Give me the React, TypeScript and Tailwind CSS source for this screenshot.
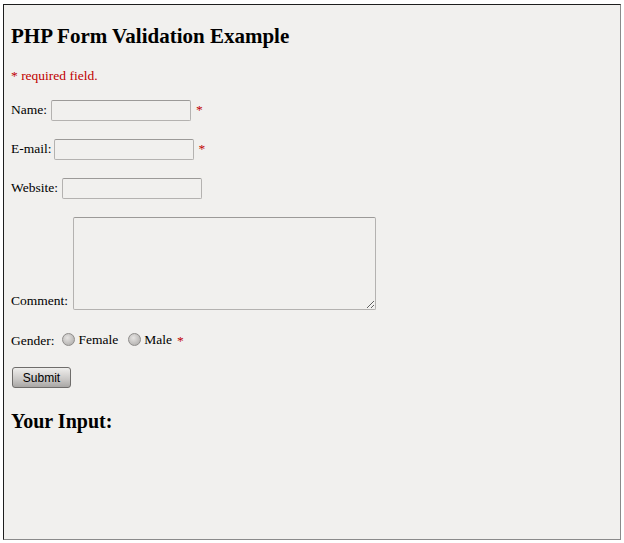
import React from "react";

const serif = "font-['Liberation_Serif','Times_New_Roman',serif]";

function Star() {
  return <span className="ml-[5px] text-[#c00000]">*</span>;
}

function Field({ label, gap, star }: { label: string; gap: string; star?: boolean }) {
  return (
    <div className="flex items-center h-[21px]">
      <span>{label}</span>
      <input
        type="text"
        className={`${gap} h-[21px] w-[140px] border border-[#b4b2b0] border-t-[#9c9a98] bg-[#f1f0ee] rounded-[2px] outline-none`}
      />
      {star && <Star />}
    </div>
  );
}

function Radio({ label }: { label: string }) {
  return (
    <span className="inline-flex items-center">
      <span className="w-[13px] h-[13px] rounded-full border border-[#8e8c8a] bg-[radial-gradient(circle_at_40%_35%,#e6e4e2,#a8a6a4)]" />
      <span className="ml-[3px]">{label}</span>
    </span>
  );
}

export default function App() {
  return (
    <div className="w-[624px] h-[543px] bg-white pl-[3px] pt-[4px]">
      <div
        className={`w-[618px] h-[536px] bg-[#f1f0ee] border-l border-t border-l-[#1e1e1e] border-t-[#1e1e1e] border-r border-b border-r-[#8a8a8a] border-b-[#8a8a8a] pl-[7px] text-[13.5px] leading-none text-black ${serif}`}
      >
        <h2 className="pt-[21px] text-[21px] font-bold">PHP Form Validation Example</h2>
        <p className="mt-[22px] text-[#c00000]">* required field.</p>
        <div className="mt-[17px]">
          <Field label="Name:" gap="ml-[4px]" star />
        </div>
        <div className="mt-[18px]">
          <Field label="E-mail:" gap="ml-[2px]" star />
        </div>
        <div className="mt-[18px]">
          <Field label="Website:" gap="ml-[4px]" />
        </div>
        <div className="mt-[18px] flex items-end">
          <span className="mb-[2px]">Comment:</span>
          <textarea className="ml-[5px] w-[303px] h-[93px] border border-[#b4b2b0] border-t-[#9c9a98] bg-[#f1f0ee] rounded-[2px] outline-none resize-y" />
        </div>
        <div className="mt-[23px] flex items-center">
          <span>Gender:</span>
          <span className="ml-[8px]">
            <Radio label="Female" />
          </span>
          <span className="ml-[10px]">
            <Radio label="Male" />
          </span>
          <Star />
        </div>
        <button className="mt-[19px] ml-[1px] w-[59px] h-[21px] border border-[#6f6d6b] rounded-[3px] bg-[linear-gradient(#efeeec,#c9c7c5_60%,#a9a7a5)] text-[12px] font-['Liberation_Sans',Arial,sans-serif] text-black">
          Submit
        </button>
        <h2 className="mt-[23px] text-[20px] font-bold">Your Input:</h2>
      </div>
    </div>
  );
}
